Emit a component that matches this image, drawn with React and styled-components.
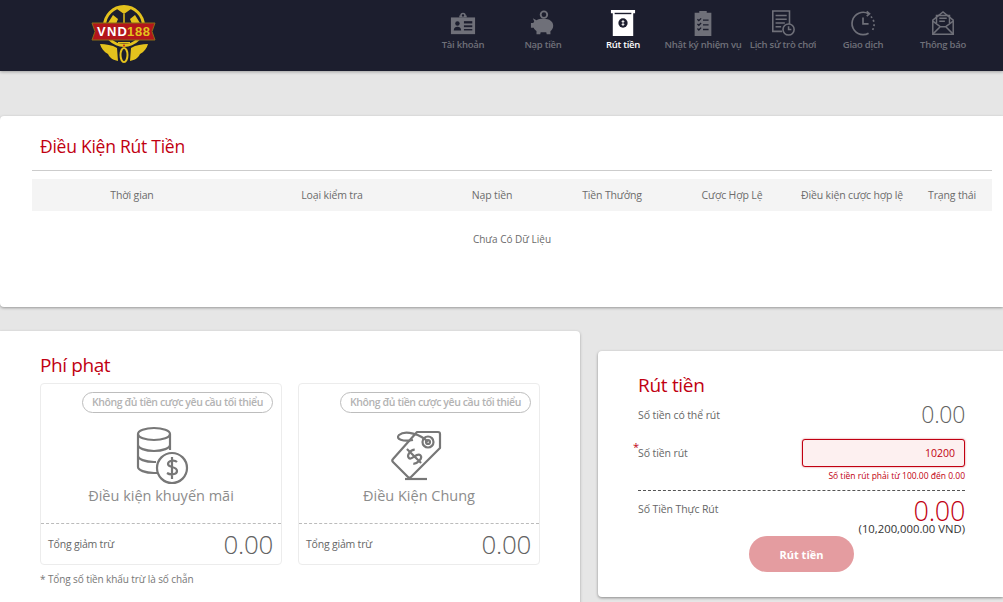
import React from 'react';
import styled, {createGlobalStyle} from 'styled-components';

const GlobalStyle = createGlobalStyle`
  html, body {
    margin: 0;
    padding: 0;
    height: 100%;
    overflow: hidden;
    background: #e6e6e6;
    font-family: "Open Sans", "Noto Sans", sans-serif;
  }
  * { box-sizing: border-box; }
`;

const Page = styled.div`
  width: 1003px;
  height: 602px;
  overflow: hidden;
`;
const Header = styled.header`
  display: flex;
  justify-content: space-between;
  height: 71px;
  padding: 3px 20px 0 89px;
  background: #1c1e2e;
  box-shadow: 0 1px 3px rgba(0, 0, 0, 0.3);
`;
const Logo = styled.svg`
  width: 72px;
  height: 62px;
`;
const Nav = styled.nav`
  display: flex;
`;
const NavItem = styled.a`
  width: 80px;
  display: flex;
  flex-direction: column;
  align-items: center;
  padding-top: 7px;
  color: ${({$active}) => ($active ? '#fff' : '#6f7079')};
  font-size: 9.5px;
  font-weight: 600;
  letter-spacing: -0.25px;
  line-height: 14px;
  white-space: nowrap;
`;
const NavIcon = styled.svg`
  width: 26px;
  height: 26px;
  margin-bottom: 2px;
  color: inherit;
`;

const Section = styled.section`
  margin-top: 45px;
  height: 191px;
  padding: 20px 0 0 32px;
  background: #fff;
  border-radius: 4px 0 0 4px;
  box-shadow: 0 1px 3px rgba(0, 0, 0, 0.35);
`;
const SectionTitle = styled.h2`
  margin: 0;
  height: 35px;
  padding-left: 8px;
  width: 960px;
  border-bottom: 1px solid #ccc;
  color: #c10011;
  font-size: 17.5px;
  font-weight: 400;
  letter-spacing: -0.25px;
  line-height: 21px;
`;
const Table = styled.div`
  width: 960px;
  margin-top: 8px;
`;
const HeadRow = styled.div`
  display: grid;
  grid-template-columns: 200px 200px 120px 120px 120px 120px 80px;
  height: 32px;
  background: #f4f4f4;
`;
const HeadCell = styled.div`
  display: flex;
  align-items: center;
  justify-content: center;
  color: #6b6b6b;
  font-size: 10.5px;
  letter-spacing: -0.15px;
  white-space: nowrap;
`;
const Empty = styled.div`
  padding-top: 21px;
  text-align: center;
  color: #6b6b6b;
  font-size: 10px;
`;

const Bottom = styled.div`
  display: flex;
  align-items: flex-start;
  gap: 18px;
  margin-top: 24px;
`;
const Penalty = styled.section`
  width: 580px;
  height: 290px;
  padding: 20px 40px 0;
  background: #fff;
  border-radius: 0 4px 4px 0;
  box-shadow: 0 1px 3px rgba(0, 0, 0, 0.3);
`;
const PenaltyTitle = styled.h2`
  margin: 0 0 4px;
  height: 28px;
  color: #c10011;
  font-size: 19px;
  font-weight: 400;
  letter-spacing: -0.4px;
  line-height: 28px;
`;
const Cards = styled.div`
  display: flex;
  gap: 16px;
`;
const Card = styled.div`
  width: 242px;
  height: 182px;
  display: flex;
  flex-direction: column;
  border: 1px solid #ececec;
  border-radius: 4px;
`;
const CardBody = styled.div`
  height: 140px;
  display: flex;
  flex-direction: column;
  align-items: center;
  border-bottom: 1px dashed #bbb;
  padding-top: 8px;
`;
const Pill = styled.span`
  align-self: flex-end;
  margin-right: 8px;
  height: 21px;
  padding: 0 9px;
  border: 1px solid #bdbdbd;
  border-radius: 11px;
  color: #b3b3b3;
  font-size: 10.5px;
  font-weight: 600;
  line-height: 19px;
  letter-spacing: -0.4px;
  white-space: nowrap;
`;
const CardIcon = styled.svg`
  width: 56px;
  height: 60px;
  margin-top: 13px;
  color: #777;
`;
const CardLabel = styled.div`
  color: #8c8c8c;
  font-size: 14.5px;
  line-height: 20px;
`;
const CardFoot = styled.div`
  flex: 1;
  display: flex;
  align-items: center;
  justify-content: space-between;
  padding: 0 8px 0 7px;
`;
const FootLabel = styled.span`
  color: #666;
  font-size: 10.5px;
  letter-spacing: -0.2px;
`;
const Amount = styled.span`
  color: ${({$red}) => ($red ? '#c10011' : '#626262')};
  font-size: ${({$size}) => $size || 26}px;
  font-weight: 300;
  letter-spacing: -0.3px;
  line-height: 1;
`;
const Note = styled.p`
  margin: 7px 0 0;
  color: #777;
  font-size: 10px;
  letter-spacing: -0.1px;
`;

const Withdraw = styled.section`
  width: 405px;
  height: 246px;
  margin-top: 20px;
  padding: 21px 38px 0 40px;
  background: #fff;
  border-radius: 4px 0 0 4px;
  box-shadow: 0 1px 3px rgba(0, 0, 0, 0.4);
`;
const WithdrawTitle = styled.h2`
  margin: 0 0 5px;
  height: 26px;
  color: #c10011;
  font-size: 19px;
  font-weight: 400;
  letter-spacing: -0.3px;
  line-height: 26px;
`;
const Row = styled.div`
  display: flex;
  justify-content: space-between;
  align-items: ${({$top}) => ($top ? 'flex-start' : 'center')};
  margin-top: ${({$gap}) => $gap || 0}px;
`;
const RowLabel = styled.span`
  position: relative;
  top: ${({$shift}) => $shift || 0}px;
  color: #666;
  font-size: 10.5px;
  letter-spacing: -0.1px;
`;
const Star = styled.span`
  position: absolute;
  left: -5px;
  top: -7px;
  color: #c10011;
  font-size: 11px;
`;
const AmountInput = styled.input`
  width: 163px;
  height: 28px;
  padding: 0 9px;
  border: 1.5px solid #c10011;
  border-radius: 3px;
  background: #fdf0f0;
  box-shadow: 0 0 2px rgba(193, 0, 17, 0.6);
  color: #c10011;
  font-family: inherit;
  font-size: 10.5px;
  text-align: right;
  outline: none;
`;
const ErrorText = styled.div`
  margin-top: 3px;
  text-align: right;
  color: #c10011;
  font-size: 8.5px;
  line-height: 12px;
`;
const Dashed = styled.div`
  margin-top: 8px;
  border-top: 1px dashed #555;
`;
const Converted = styled.div`
  margin-top: -2px;
  text-align: right;
  color: #333;
  font-size: 11.3px;
  line-height: 13px;
`;
const SubmitWrap = styled.div`
  display: flex;
  justify-content: center;
  margin-top: 1px;
`;
const Submit = styled.button`
  width: 105px;
  height: 36px;
  border: 0;
  border-radius: 18px;
  background: #e49ca0;
  color: #fff;
  font-family: inherit;
  font-size: 11px;
  font-weight: 700;
`;

const iconProps = {viewBox: '0 0 28 28', fill: 'currentColor'};

const IdIcon = () => (
  <NavIcon {...iconProps}>
    <path d="M11 6a3 3 0 0 1 6 0h1v2H10V6zm3-1.500a1.300 1.300 0 1 0 0 2.600 1.300 1.300 0 0 0 0-2.600z" />
    <rect x="1" y="8" width="26" height="18" />
    <circle cx="8" cy="14.500" r="2.400" fill="#1c1e2e" />
    <path d="M4 22c0-3 2-4 4-4s4 1 4 4z" fill="#1c1e2e" />
    <rect x="15" y="12" width="9" height="2.500" fill="#1c1e2e" />
    <rect x="15" y="16.500" width="9" height="2" fill="#1c1e2e" />
    <rect x="15" y="20.500" width="9" height="1.500" fill="#1c1e2e" />
  </NavIcon>
);
const PigIcon = () => (
  <NavIcon {...iconProps}>
    <circle cx="15" cy="5" r="4.500" />
    <circle cx="15" cy="5" r="2.500" fill="#1c1e2e" />
    <path d="M3 9l4 2c2-1 4-1.500 8-1.500 6 0 10 3 10 7.500 0 3-1.500 4.500-3 6v3h-4l-.5-2h-6l-.5 2H7v-3.500c-1.500-1-2.500-2-3-3.500H1v-5h2.500c.5-1 1-1.500 1-2z" />
  </NavIcon>
);
const AtmIcon = () => (
  <NavIcon {...iconProps}>
    <rect x="1" y="0" width="26" height="3.500" />
    <rect x="3" y="3" width="22" height="25" />
    <rect x="5" y="3" width="18" height="1.500" fill="#1c1e2e" />
    <circle cx="14" cy="14" r="5" fill="#1c1e2e" />
    <path d="M14 10.800v6.400M12.500 12.500h3M12.500 15.500h3" stroke="#fff" strokeWidth="1" fill="none" />
  </NavIcon>
);
const ClipIcon = () => (
  <NavIcon {...iconProps}>
    <path d="M10 1h8v2h5v25H5V3h5z" />
    <path d="M8 10l1.500 1.500L12 9M8 15l1.500 1.500L12 14M8 20l1.500 1.500L12 19M14 11h6M14 16h6M14 21h6" stroke="#1c1e2e" strokeWidth="1.400" fill="none" />
  </NavIcon>
);
const HistoryIcon = () => (
  <NavIcon viewBox="0 0 28 28" fill="none" stroke="currentColor" strokeWidth="1.700">
    <path d="M13 23H3V1h18v14" />
    <path d="M6 6h12M6 10h12M6 14h10M6 18h6" />
    <circle cx="20" cy="21" r="6" />
    <path d="M20 17.500V21h3" />
  </NavIcon>
);
const ClockIcon = () => (
  <NavIcon viewBox="0 0 28 28" fill="none" stroke="currentColor" strokeWidth="1.800">
    <path d="M20 4A12 12 0 1 0 14 26.500c2.500 0 4.500-.5 6-1.500" />
    <path d="M22.500 7a12 12 0 0 1 1.800 14.500" strokeDasharray="2 2.500" />
    <path d="M18 1.500L21 4l-3 2.500" />
    <path d="M14 8v7h6" />
  </NavIcon>
);
const MailIcon = () => (
  <NavIcon viewBox="0 0 28 28" fill="none" stroke="currentColor" strokeWidth="1.600">
    <path d="M3 11v15h22V11L14 2z" />
    <path d="M3 26l8-8h6l8 8M3 12l8 6M25 12l-8 6" />
    <path d="M7 14V6h14v8" />
    <path d="M10 9h8M10 12h6" />
  </NavIcon>
);

const navItems = [
  ['Tài khoản', IdIcon],
  ['Nạp tiền', PigIcon],
  ['Rút tiền', AtmIcon, true],
  ['Nhật ký nhiệm vụ', ClipIcon],
  ['Lịch sử trò chơi', HistoryIcon],
  ['Giao dịch', ClockIcon],
  ['Thông báo', MailIcon],
];
const columns = ['Thời gian', 'Loại kiểm tra', 'Nạp tiền', 'Tiền Thưởng', 'Cược Hợp Lệ', 'Điều kiện cược hợp lệ', 'Trạng thái'];

const CoinsIcon = () => (
  <CardIcon viewBox="0 0 56 60" fill="none" stroke="currentColor" strokeWidth="2.200">
    <ellipse cx="21" cy="8" rx="16" ry="6" />
    <path d="M5 8v33c0 3 7 6 16 6h3" />
    <path d="M37 8v16" />
    <path d="M5 19c0 3 7 6 16 6s16-3 16-6" />
    <path d="M5 30c0 3 7 6 16 6h2" />
    <circle cx="39" cy="42" r="15" fill="#fff" />
    <path d="M44 36c-2-2-9-2-9 2 0 4 9 2 9 7 0 4-7 4-10 2M39 31v22" />
  </CardIcon>
);
const TagIcon = () => (
  <CardIcon viewBox="0 0 56 60" fill="none" stroke="currentColor" strokeWidth="2.200">
    <path d="M26 6h21c1 0 2 1 2 2v14L20 51c-1 1-2 1-3 0L2 36c-1-1-1-2 0-3z" strokeLinejoin="round" />
    <circle cx="37" cy="16" r="5.500" />
    <circle cx="37" cy="16" r="2" />
    <path d="M37 16C30 8 14 4 8 9c-4 4 4 7 14 5" />
    <path transform="rotate(-45 23 30)" d="M28 26c-3-3-10-2-10 2 0 4 10 1 10 6 0 4-8 4-11 1M23 20v20" />
    <path d="M14 53h22" />
  </CardIcon>
);

const conditions = [
  ['Điều kiện khuyến mãi', CoinsIcon],
  ['Điều Kiện Chung', TagIcon],
];

export default function App() {
  return (
    <Page>
      <GlobalStyle />
      <Header>
        <Logo viewBox="0 0 72 62">
          <circle cx="35" cy="23" r="19.500" fill="none" stroke="#e4c21d" strokeWidth="3" />
          <path d="M28 6l7 5 7-5-2-3H30zM19 20l5-8 5 4-2 5zM51 20l-5-8-5 4 2 5z" fill="#e4c21d" />
          <path d="M35 11v9" stroke="#e4c21d" strokeWidth="1.500" />
          <path d="M3 20h63l-3 8.500 3 8.500H3l3-8.500z" fill="#b3161b" stroke="#8c6d14" strokeWidth="1" />
          <text x="8" y="33" fontFamily="Liberation Sans, sans-serif" fontSize="13" fontWeight="700" fill="#fff" textLength="30">VND</text>
          <text x="38" y="33" fontFamily="Liberation Sans, sans-serif" fontSize="13" fontWeight="700" fill="#e4c21d" textLength="23">188</text>
          <path d="M11 41c6 0 12 1 17 4l1 13c-5-1-8-3-10-7-4-2-7-6-8-10zM59 41c-6 0-12 1-17 4l-1 13c5-1 8-3 10-7 4-2 7-6 8-10z" fill="#e4c21d" />
          <path d="M29 39h12v1.500H29z" fill="#e4c21d" />
          <circle cx="35" cy="42.500" r="1" fill="#c8161b" />
          <ellipse cx="35" cy="52" rx="3.500" ry="7" fill="none" stroke="#e4c21d" strokeWidth="2" />
        </Logo>
        <Nav>
          {navItems.map(([label, Icon, active]) => (
            <NavItem key={label} $active={active}>
              <Icon />
              {label}
            </NavItem>
          ))}
        </Nav>
      </Header>

      <Section>
        <SectionTitle>Điều Kiện Rút Tiền</SectionTitle>
        <Table>
          <HeadRow>
            {columns.map(col => (
              <HeadCell key={col}>{col}</HeadCell>
            ))}
          </HeadRow>
          <Empty>Chưa Có Dữ Liệu</Empty>
        </Table>
      </Section>

      <Bottom>
        <Penalty>
          <PenaltyTitle>Phí phạt</PenaltyTitle>
          <Cards>
            {conditions.map(([label, Icon]) => (
              <Card key={label}>
                <CardBody>
                  <Pill>Không đủ tiền cược yêu cầu tối thiểu</Pill>
                  <Icon />
                  <CardLabel>{label}</CardLabel>
                </CardBody>
                <CardFoot>
                  <FootLabel>Tổng giảm trừ</FootLabel>
                  <Amount>0.00</Amount>
                </CardFoot>
              </Card>
            ))}
          </Cards>
          <Note>* Tổng số tiền khấu trừ là số chẵn</Note>
        </Penalty>

        <Withdraw>
          <WithdrawTitle>Rút tiền</WithdrawTitle>
          <Row>
            <RowLabel>Số tiền có thể rút</RowLabel>
            <Amount $size={23}>0.00</Amount>
          </Row>
          <Row $gap={13}>
            <RowLabel>
              <Star>*</Star>
              Số tiền rút
            </RowLabel>
            <AmountInput defaultValue="10200" />
          </Row>
          <ErrorText>Số tiền rút phải từ 100.00 đến 0.00</ErrorText>
          <Dashed />
          <Row $top $gap={6}>
            <RowLabel $shift={5}>Số Tiền Thực Rút</RowLabel>
            <Amount $red $size={27}>0.00</Amount>
          </Row>
          <Converted>(10,200,000.00 VND)</Converted>
          <SubmitWrap>
            <Submit>Rút tiền</Submit>
          </SubmitWrap>
        </Withdraw>
      </Bottom>
    </Page>
  );
}
